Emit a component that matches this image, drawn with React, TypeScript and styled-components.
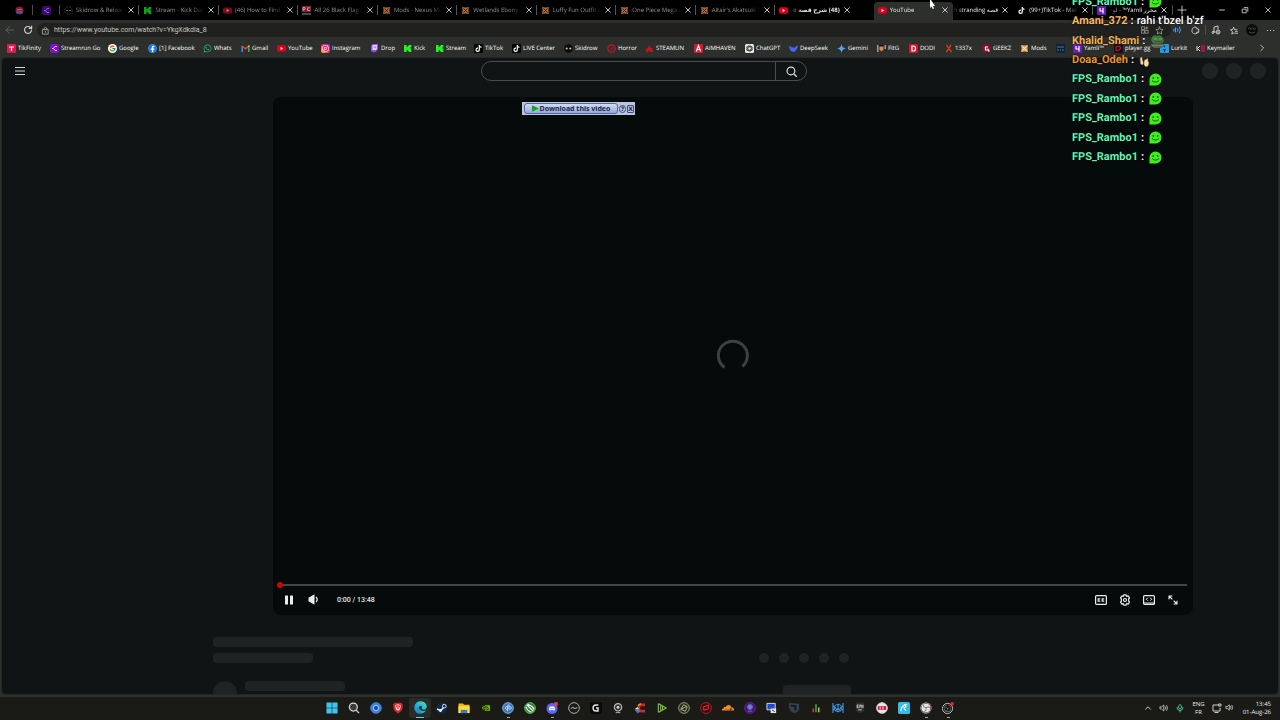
import React from "react";
import styled, { createGlobalStyle, css } from "styled-components";
import {
  FaTiktok, FaInstagram, FaWhatsapp, FaDiscord, FaCloudflare, FaEdge, FaFacebook,
} from "react-icons/fa";
import { SiNvidia, SiBrave, SiObsstudio } from "react-icons/si";
import { FcGoogle } from "react-icons/fc";

const ui = `"Open Sans", "Noto Sans", "DejaVu Sans", sans-serif`;

const GlobalStyle = createGlobalStyle`
  * { box-sizing: border-box; }
  html, body { margin: 0; padding: 0; background: #000; }
  body { font-family: ${ui}; font-size: 6px; color: #e4e4e4; overflow: hidden; text-rendering: geometricPrecision; }
  button, input { font: inherit; color: inherit; border: 0; padding: 0; margin: 0; background: none; outline: none; }
  svg { display: block; flex: none; }
`;

/* ---------- browser chrome ---------- */

const Desktop = styled.div`
  position: relative;
  display: flex;
  flex-direction: column;
  height: 100vh;
  background: #2d2f2d;
  overflow: hidden;
`;

const TabStrip = styled.header`
  display: flex;
  flex: none;
  height: 20px;
  background: #000;
`;

const PinnedTab = styled.button<{ $wide?: boolean }>`
  display: flex;
  align-items: center;
  justify-content: center;
  flex: none;
  width: ${(p) => (p.$wide ? 33 : 27)}px;
  padding-left: ${(p) => (p.$wide ? 5 : 0)}px;
  background: linear-gradient(#4c4c4c, #4c4c4c) right 5px / 1px 10px no-repeat;
`;

type TabKind = "idle" | "bright" | "active" | "covered";

const TabBox = styled.div<{ $kind: TabKind; $line: boolean }>`
  display: flex;
  align-items: center;
  gap: 3px;
  min-width: 0;
  height: 20px;
  padding: 0 4px;
  flex: ${(p) => (p.$kind === "covered" ? "0 0 60px" : "1 1 79px")};
  ${(p) =>
    p.$line &&
    css`
      background: linear-gradient(#555, #555) right 5px / 1px 10px no-repeat;
    `}
  ${(p) =>
    p.$kind === "active" &&
    css`
      height: 18px;
      margin: 2px 0 0 19px;
      padding-bottom: 2px;
      background: #2d2f2d;
      border-radius: 4px 4px 0 0;
    `}
  ${(p) => p.$kind === "covered" && "padding-left: 0;"}
`;

const TabTitle = styled.span<{ $kind: TabKind; $rtl?: boolean }>`
  flex: 1;
  min-width: 0;
  overflow: hidden;
  white-space: nowrap;
  line-height: 12px;
  direction: ${(p) => (p.$rtl ? "rtl" : "ltr")};
  color: ${(p) => (p.$kind === "idle" ? "#929292" : "#e8e8e8")};
  font-weight: ${(p) => (p.$kind === "bright" ? 700 : 400)};
  mask-image: ${(p) =>
    `linear-gradient(${p.$rtl ? "to left" : "to right"}, #000 ${p.$kind === "active" ? 100 : 75}%, transparent)`};
`;

const IconButton = styled.button<{ $w?: number; $tone?: string }>`
  display: flex;
  align-items: center;
  justify-content: center;
  flex: none;
  width: ${(p) => p.$w ?? 18}px;
  height: 14px;
  color: ${(p) => p.$tone ?? "#cfcfcf"};
`;

const TabClose = styled(IconButton)`
  width: 8px;
`;

const StripEnd = styled.div`
  display: flex;
  align-items: center;
  justify-content: space-between;
  flex: none;
  width: 108px;
  padding: 0 3px 0 1px;
  background: linear-gradient(#4c4c4c, #4c4c4c) left 5px / 1px 10px no-repeat;
`;

const WindowButtons = styled.div`
  display: flex;
  gap: 5px;
`;

const Toolbar = styled.div`
  display: flex;
  align-items: center;
  flex: none;
  height: 20px;
  padding: 0 1px;
  background: #2d2f2d;
`;

const AddressBar = styled.label`
  display: flex;
  align-items: center;
  flex: 1;
  height: 14px;
  padding: 0 5px 0 4px;
  border-radius: 7px;
  background: #20211e;
`;

const UrlInput = styled.input`
  flex: 1;
  min-width: 0;
  height: 12px;
  padding-left: 4px;
  font-family: Roboto, sans-serif;
  font-size: 7px;
  color: #c4c4c4;
`;

const ExtensionsButton = styled(IconButton)`
  background: linear-gradient(#4c4e4c, #4c4e4c) 22px 2px / 1px 10px no-repeat;
`;

const BookmarksBar = styled.nav`
  display: flex;
  align-items: center;
  flex: none;
  height: 16px;
  padding-left: 7px;
  background: #2d2f2d;
`;

const Bookmark = styled.a<{ $w: number }>`
  display: flex;
  align-items: center;
  gap: 2px;
  flex: 0 0 ${(p) => p.$w}px;
  line-height: 12px;
  white-space: nowrap;
  color: #fff;
  text-decoration: none;
`;

const More = styled(IconButton)`
  margin-left: auto;
  margin-right: 9px;
`;

/* ---------- page ---------- */

const Page = styled.main`
  position: relative;
  flex: 1;
  min-height: 0;
  margin: 1px 1px 2px;
  border: 1px solid #232726;
  border-radius: 5px;
  background: #101415;
  overflow: hidden;
`;

const Masthead = styled.div`
  display: grid;
  grid-template-columns: 1fr 326px 1fr;
  align-items: center;
  height: 26px;
  padding: 0 5px 0 13px;
`;

const SearchForm = styled.form`
  display: flex;
  width: 326px;
  height: 20px;
  border: 1px solid #4a4d4d;
  border-radius: 10px;
  overflow: hidden;
`;

const SearchInput = styled.input`
  flex: 1;
  min-width: 0;
  padding: 0 8px;
`;

const SearchButton = styled.button`
  display: flex;
  align-items: center;
  justify-content: center;
  width: 31px;
  border-left: 1px solid #4a4d4d;
  color: #dcdcdc;
`;

const Ghosts = styled.div`
  display: flex;
  justify-content: flex-end;
  gap: 8px;
  padding-right: 7px;
`;

const Ghost = styled.span<{ $w: number; $h: number }>`
  display: block;
  flex: none;
  width: ${(p) => p.$w}px;
  height: ${(p) => p.$h}px;
  border-radius: ${(p) => (p.$w === p.$h ? 12 : 4)}px;
  background: #202324;
`;

const Player = styled.section`
  position: relative;
  display: flex;
  flex-direction: column;
  aspect-ratio: 16 / 9;
  margin: 13px 85px 0 271px;
  padding: 0 6px 0 4px;
  border-radius: 8px;
  background: #050a0b;
`;

const Stage = styled.div`
  display: flex;
  align-items: center;
  justify-content: center;
  flex: 1;
  padding: 33px 0 0 2px;
`;

const Seek = styled.input`
  appearance: none;
  flex: none;
  width: 100%;
  height: 6px;
  background: linear-gradient(#424646, #424646) center / 100% 2px no-repeat;
  &::-webkit-slider-thumb {
    appearance: none;
    width: 6px;
    height: 6px;
    border-radius: 3px;
    background: #d3000f;
  }
`;

const Controls = styled.div`
  display: flex;
  align-items: center;
  flex: none;
  height: 24px;
  margin-bottom: 3px;
  padding-right: 2px;
  font-family: Roboto, sans-serif;
  font-size: 7px;
  font-weight: 500;
  color: #e8e8e8;
`;

const ControlButton = styled(IconButton)`
  width: 24px;
  color: #ececec;
`;

const Time = styled.span`
  flex: 1;
  padding-left: 12px;
`;

const DownloadBar = styled.div`
  position: absolute;
  top: 5px;
  left: 249px;
  display: flex;
  align-items: center;
  gap: 1px;
  height: 13px;
  padding: 0 1px 0 2px;
  background: #b9c6de;
  color: #1c2450;
`;

const DownloadButton = styled.button`
  display: flex;
  align-items: center;
  justify-content: center;
  gap: 1px;
  width: 94px;
  height: 11px;
  border: 1px solid #4f68a8;
  border-radius: 3px;
  background: linear-gradient(#d2dcee, #94a9d4);
  font: bold 7px/9px "Noto Sans", sans-serif;
  white-space: nowrap;
`;

const BadgeButton = styled.button<{ $round?: boolean }>`
  width: 7px;
  height: 8px;
  border: 1px solid #3e4c80;
  border-radius: ${(p) => (p.$round ? 4 : 1)}px;
  font: bold 6px/6px "DejaVu Sans", sans-serif;
`;

const Below = styled.div`
  display: flex;
  justify-content: space-between;
  width: 638px;
  margin: 22px 0 0 211px;
`;

const Lines = styled.div`
  display: flex;
  flex-direction: column;
  gap: 6px;
`;

const Owner = styled.div`
  display: flex;
  gap: 8px;
  padding-top: 12px;
`;

const Actions = styled.div`
  display: flex;
  flex-direction: column;
  align-items: flex-end;
  padding-top: 16px;
`;

const Dots = styled.div`
  display: flex;
  gap: 10px;
  padding: 0 2px 22px 0;
`;

/* ---------- overlay chat ---------- */

const Chat = styled.aside`
  position: absolute;
  top: -8px;
  right: 0;
  display: flex;
  flex-direction: column;
  width: 208px;
  height: 175px;
  font: 700 11px/14px Roboto, sans-serif;
  text-shadow: 0 0 2px #000;
  pointer-events: none;
`;

const ChatLine = styled.div`
  display: flex;
  align-items: center;
  flex: 1;
  gap: 3px;
  color: #fff;
  white-space: nowrap;
`;

const Nick = styled.span<{ $c: string }>`
  color: ${(p) => p.$c};
`;

const Words = styled.span`
  font-weight: 500;
`;

const Emote = styled.span`
  padding-left: 2px;
`;

const Pointer = styled.svg`
  position: absolute;
  top: 0;
  left: 929px;
`;

/* ---------- taskbar ---------- */

const Taskbar = styled.footer`
  display: grid;
  grid-template-columns: 1fr auto 1fr;
  align-items: center;
  flex: none;
  height: 23px;
  padding-bottom: 2px;
  background: #1a1b17;
`;

const Apps = styled.div`
  display: flex;
`;

const AppButton = styled.button<{ $active?: boolean; $open?: boolean }>`
  position: relative;
  display: flex;
  align-items: center;
  justify-content: center;
  width: 22px;
  height: 20px;
  border-radius: 3px;
  background: ${(p) => (p.$active ? "#2a2c29" : "none")};
  &::after {
    content: "";
    display: ${(p) => (p.$active || p.$open ? "block" : "none")};
    position: absolute;
    bottom: 0;
    width: ${(p) => (p.$active ? 8 : 3)}px;
    height: 1px;
    background: ${(p) => (p.$active ? "#56d3f5" : "#a5a5a5")};
  }
`;

const Tray = styled.div`
  display: flex;
  align-items: center;
  justify-content: flex-end;
  padding-right: 9px;
  color: #f0f0f0;
  line-height: 8px;
`;

const Lang = styled.button`
  width: 21px;
  line-height: 8px;
  text-align: center;
`;

const Clock = styled.time`
  width: 38px;
  text-align: right;
  white-space: nowrap;
`;

/* ---------- drawings ---------- */

type StrokeProps = { d: string; size?: number; w?: number; color?: string };
const Stroke = ({ d, size = 10, w = 1, color = "currentColor" }: StrokeProps) => (
  <svg width={size} height={size} viewBox="0 0 10 10" fill="none" stroke={color} strokeWidth={w} strokeLinecap="round" strokeLinejoin="round">
    <path d={d} />
  </svg>
);

const CROSS = "M2.2 2.2L7.8 7.8M7.8 2.2L2.2 7.8";
const SPEAKER = "M1 4v2h1.5L4.8 8V2L2.5 4zM6.3 3.7q1 1.3 0 2.6M7.7 2.5q2 2.5 0 5";

const YouTubeMark = () => (
  <svg width="9" height="9" viewBox="0 0 9 9"><rect y="1.3" width="9" height="6.4" rx="1.8" fill="#e3001c" /><path d="M3.6 3v3l2.6-1.5z" fill="#fff" /></svg>
);
const KickMark = () => (
  <svg width="9" height="9" viewBox="0 0 9 9"><path d="M1 1h2.6v2h1V2h1V1H8.4v2.3h-1v1.2h1V8H5.6V7h-1V6h-1v2H1z" fill="#1df51d" /></svg>
);
const Purple = () => (
  <svg width="9" height="9" viewBox="0 0 9 9"><rect width="9" height="9" rx="2" fill="#7a12d6" /><path d="M2 4.5h1.5L5 2.5h2M3.5 4.5L5 6.5h2" stroke="#f0b8ff" fill="none" /></svg>
);
const NexusMark = ({ bright }: { bright?: boolean }) => (
  <svg width="9" height="9" viewBox="0 0 9 9"><path d="M1 1l3.5.6L8 1l-.6 3.5L8 8l-3.5-.6L1 8l.6-3.5z" fill={bright ? "#f3a75c" : "#a5683a"} /><path d="M2.5 2.5l4 4M6.5 2.5l-4 4" stroke={bright ? "#fff" : "#3a2414"} strokeWidth=".9" /></svg>
);
const Tile = ({ bg, mark, fg = "#fff", round }: { bg: string; mark?: string; fg?: string; round?: boolean }) => (
  <svg width="9" height="9" viewBox="0 0 9 9">
    <rect width="9" height="9" rx={round ? 4.5 : 1} fill={bg} />
    {mark && <path d={mark} fill="none" stroke={fg} strokeWidth="1.2" />}
  </svg>
);
const TikTokTile = () => (
  <svg width="9" height="9" viewBox="0 0 9 9"><rect width="9" height="9" rx="1" fill="#050505" /><FaTiktok x="1" y="1" size={7} color="#fff" /></svg>
);
const GmailMark = () => (
  <svg width="9" height="9" viewBox="0 0 9 9" fill="none" strokeWidth="1.6"><path d="M1.2 8V2" stroke="#4285f4" /><path d="M7.8 8V2" stroke="#34a853" /><path d="M1 2l3.5 2.8L8 2" stroke="#ea4335" /><path d="M7.2 2.6L8.5 1.7" stroke="#fbbc04" /></svg>
);
const InstaTile = () => (
  <svg width="9" height="9" viewBox="0 0 9 9">
    <defs><linearGradient id="ig" x1="0" y1="1" x2="1" y2="0"><stop offset="0" stopColor="#fdc050" /><stop offset=".5" stopColor="#ee2a62" /><stop offset="1" stopColor="#8434e0" /></linearGradient></defs>
    <rect width="9" height="9" rx="2" fill="url(#ig)" /><FaInstagram x="1" y="1" size={7} color="#fff" />
  </svg>
);
const Skull = () => (
  <svg width="9" height="9" viewBox="0 0 9 9"><circle cx="4.5" cy="4.5" r="4.3" fill="#090909" /><circle cx="2.7" cy="4.5" r="1.1" fill="#d9adad" /><circle cx="6.3" cy="4.5" r="1.1" fill="#d9adad" /></svg>
);
const RedRing = () => (
  <svg width="9" height="9" viewBox="0 0 9 9" fill="none" stroke="#c9102a"><circle cx="4.5" cy="4.5" r="3.7" strokeWidth="1.2" /><path d="M2.8 5.8L6 2.8M4 6.4l2.4-2" strokeWidth=".8" /></svg>
);
const OpenAi = () => (
  <svg width="9" height="9" viewBox="0 0 9 9"><rect width="9" height="9" rx="1.5" fill="#e9e9e9" /><g fill="none" stroke="#222" strokeWidth=".6"><ellipse cx="4.5" cy="4.5" rx="1.7" ry="3.2" /><ellipse cx="4.5" cy="4.5" rx="1.7" ry="3.2" transform="rotate(60 4.5 4.5)" /><ellipse cx="4.5" cy="4.5" rx="1.7" ry="3.2" transform="rotate(120 4.5 4.5)" /></g></svg>
);
const Solid = ({ d, c }: { d: string; c: string }) => (
  <svg width="9" height="9" viewBox="0 0 9 9"><path d={d} fill={c} /></svg>
);
const FaceTile = () => (
  <svg width="9" height="9" viewBox="0 0 9 9"><rect width="9" height="9" fill="#3a2a22" /><path d="M2.5 1.5h4v4L4.5 7.5 2.5 5.5z" fill="#c98c68" /><path d="M2 1h5v1.5H2z" fill="#1a1210" /><path d="M0 1h1.5v7H0zM7.5 1H9v4H7.5z" fill="#9f9a95" /></svg>
);

const Blob = () => (
  <svg width="13" height="13" viewBox="0 0 13 13"><path d="M.5 12.5V6.5a6 6 0 1 1 6 6z" fill="#3df01c" /><circle cx="4.3" cy="5" r=".9" fill="#175a0a" /><circle cx="8.7" cy="5" r=".9" fill="#175a0a" /><path d="M3 7.5q3.5 3.3 7 0" stroke="#175a0a" strokeWidth="1" fill="none" /></svg>
);
const Pepe = () => (
  <svg width="15" height="14" viewBox="0 0 15 14"><path d="M2 3q2-3 5-1 4-2 6 2l1 3-2 2H3L1 6z" fill="#3c7a3b" /><path d="M4 5h3M9 5h3" stroke="#8fae84" strokeWidth=".8" /><path d="M4 7.5h8" stroke="#6a3a2c" strokeWidth=".8" /><path d="M1 10q6-2 13 0v2l-3 2H4l-3-2z" fill="#4f6350" /><path d="M2 11.5h11" stroke="#7c8f7e" strokeWidth=".8" /></svg>
);
const Hands = () => (
  <svg width="11" height="13" viewBox="0 0 11 13"><path d="M1 4l2-1 .5 3 1 3-1 2-2-1zM5 8l1-3 1 1 1-2 1 1v2l1 2-1 3-2 1-2-2z" fill="#f3deb0" stroke="#7d5f38" strokeWidth=".5" /></svg>
);

/* ---------- data ---------- */

type TabData = { icon?: React.ReactNode; title: string; kind?: TabKind; rtl?: boolean; line?: boolean };
const tabs: TabData[] = [
  { icon: <svg width="9" height="9" viewBox="0 0 9 9"><circle cx="4.5" cy="4.5" r="3.8" fill="none" stroke="#555" strokeDasharray="2 1" strokeWidth=".6" /><path d="M2 4.5h2M5 4.5h2" stroke="#777" /></svg>, title: "Skidrow & Reload" },
  { icon: <svg width="9" height="9" viewBox="0 0 9 9"><path d="M1 1h2.6v2h1V2h1V1H8.4v2.3h-1v1.2h1V8H5.6V7h-1V6h-1v2H1z" fill="#159b1c" /></svg>, title: "Stream - Kick Dash" },
  { icon: <svg width="9" height="9" viewBox="0 0 9 9"><rect y="1.5" width="9" height="6" rx="1.5" fill="#7d0a18" /><path d="M3.6 3v3l2.6-1.5z" fill="#b99" /></svg>, title: "(46) How to Find B" },
  { icon: <svg width="9" height="9" viewBox="0 0 9 9"><rect width="9" height="6" fill="#8d1b29" /><path d="M1 5V1.500h2v2H1M8 1.800H5.500v2.700H8M0 8h9" stroke="#bbb" strokeWidth=".8" fill="none" /></svg>, title: "All 26 Black Flag R" },
  { icon: <NexusMark />, title: "Mods - Nexus Mo" },
  { icon: <NexusMark />, title: "Wetlands Ebony -" },
  { icon: <NexusMark />, title: "Luffy Fun Outfit at" },
  { icon: <NexusMark />, title: "One Piece Mega P" },
  { icon: <NexusMark />, title: "Altair's Akatsuki R" },
  { icon: <YouTubeMark />, title: "(48) شرح قصة Tube", kind: "bright", rtl: true, line: false },
  { icon: <YouTubeMark />, title: "YouTube", kind: "active", line: false },
  { title: "قصه th stranding", kind: "covered", rtl: true, line: false },
  { icon: <TikTokTile />, title: "(99+)TikTok - Mak", kind: "covered", line: true },
  { icon: <Tile bg="#6a1bb8" mark="M3 2v3h3V2M6 5v2.5" />, title: "محرر Yamli™ - لوحة", kind: "covered", rtl: true, line: false },
];

const FullTab = styled(TabBox)`
  flex: 1 1 79px;
  padding-left: 4px;
`;

const bookmarks: [string, number, React.ReactNode][] = [
  ["TikFinity", 43, <Tile bg="#e01a4f" mark="M2 3h5M4.5 3v4" />],
  ["Streamrun Go", 58, <Purple />],
  ["Google", 40, <svg width="9" height="9" viewBox="0 0 9 9"><circle cx="4.5" cy="4.5" r="4.5" fill="#fff" /><FcGoogle x="1" y="1" size={7} /></svg>],
  ["[1] Facebook", 55, <svg width="9" height="9" viewBox="0 0 9 9"><circle cx="4.5" cy="4.5" r="4" fill="#fff" /><FaFacebook size={9} color="#1877f2" /></svg>],
  ["Whats", 38, <FaWhatsapp size={9} color="#2bb866" />],
  ["Gmail", 36, <GmailMark />],
  ["YouTube", 44, <YouTubeMark />],
  ["Instagram", 49, <InstaTile />],
  ["Drop", 33, <svg width="9" height="9" viewBox="0 0 9 9"><path d="M1 2l1.5-2H8v5.5L5.5 8H4L3 9V7.5H1z" fill="#8d4dff" /><path d="M2.5 1H7v4L5.7 6H2.5z" fill="#eadfff" /><path d="M4 2.3v2M5.7 2.3v2" stroke="#8d4dff" strokeWidth=".8" /></svg>],
  ["Kick", 32, <KickMark />],
  ["Stream", 39, <KickMark />],
  ["TikTok", 38, <TikTokTile />],
  ["LIVE Center", 52, <TikTokTile />],
  ["Skidrow", 43, <Skull />],
  ["Horror", 38, <RedRing />],
  ["STEAMUN", 49, <Solid c="#c4121f" d="M1 8V5l2-1 1-3 2 3h1l1 4H5L4 6 3 8z" />],
  ["AIMHAVEN", 51, <Tile bg="#e3132a" mark="M2.3 7.5l2.2-6 2.2 6M3 5.5h3" />],
  ["ChatGPT", 44, <OpenAi />],
  ["DeepSeek", 48, <Solid c="#4466f2" d="M0 2q2 0 3 1.5Q5 3 6 4q0-2 2-2l1-1Q9 4 7.5 5 7 8 4 8 .5 7 0 2z" />],
  ["Gemini", 40, <Solid c="#4fa3e8" d="M4.5 0Q5 4 9 4.5 5 5 4.5 9 4 5 0 4.5 4 4 4.5 0z" />],
  ["FitG", 32, <FaceTile />],
  ["DODI", 35, <Tile bg="#d6122b" mark="M3 2h1.5q2 0 2 2.5T4.500 7H3z" />],
  ["1337x", 38, <Stroke size={9} w={1.6} color="#d8381c" d="M3 1.5L8 8.5M7.5 1.5L3 8.5" />],
  ["GEEKZ", 38, <Tile round bg="#8b0e28" mark="M6 3H3.5v3H6V4.5M6 6l1.5 1.5" />],
  ["Mods", 36, <NexusMark bright />],
  ["", 17, <Tile bg="#122235" mark="M1 3h7M1 6h2M4 6h1M6 6h2" fg="#3c78b4" />],
  ["Yamli™", 41, <Tile bg="#6a1bb8" mark="M3 2v3h3V2M6 5v2.5" />],
  ["player.gg", 46, <Tile bg="#161012" mark="M2 7V3l3-1 2 2-2 2-3 1" fg="#b9142c" />],
  ["Lurkit", 36, <Tile bg="#1f9de8" mark="M4.5 1.5v1.8M3 5.5h3M4.5 6v2" fg="#0c2c50" />],
  ["Keymailer", 46, <svg width="9" height="9" viewBox="0 0 9 9"><rect x="5" y="1" width="4" height="7" fill="#a01450" /><path d="M1 2v5M4 2L1.5 4.5 4 7" stroke="#e6d6de" fill="none" /></svg>],
];

const Round = ({ bg, children, ring }: { bg: string; ring?: string; children?: React.ReactNode }) => (
  <svg width="12" height="12" viewBox="0 0 13 13"><circle cx="6.5" cy="6.5" r="5.8" fill={bg} stroke={ring ?? bg} />{children}</svg>
);
const Art = ({ children }: { children: React.ReactNode }) => <svg width="12" height="12" viewBox="0 0 13 13">{children}</svg>;

type AppData = { name: string; icon: React.ReactNode; active?: boolean; open?: boolean };
const apps: AppData[] = [
  { name: "Start", icon: <Art><path d="M.5.5h5.7v5.7H.5zM6.8.5h5.7v5.7H6.8zM.5 6.8h5.7v5.7H.5zM6.8 6.8h5.7v5.7H6.8z" fill="#3fc3ef" /></Art> },
  { name: "Search", icon: <Art><circle cx="5.8" cy="5.5" r="4.3" stroke="#ddd" strokeWidth="1.3" fill="#3b3b3b" /><path d="M8.9 8.7l3 3.3" stroke="#ddd" strokeWidth="1.3" /></Art> },
  { name: "Chromium", icon: <Round bg="#3f82dd"><circle cx="6.5" cy="6.5" r="2.9" fill="#1c4ea8" stroke="#b8d4fa" /></Round> },
  { name: "Brave", icon: <Art><path d="M3 .8h7l1.8 2-.8 6-4.5 4-4.5-4-.8-6z" fill="#e21f26" /><SiBrave x="3" y="2.5" size={7} color="#fff" /></Art> },
  { name: "Edge", active: true, icon: <svg width="13" height="13" viewBox="0 0 13 13"><defs><linearGradient id="edge" x1="0" y1="1" x2="1" y2="0"><stop offset="0" stopColor="#1580d8" /><stop offset=".6" stopColor="#29bfd8" /><stop offset="1" stopColor="#5fe07a" /></linearGradient></defs><FaEdge size={13} fill="url(#edge)" /></svg> },
  { name: "Steam", icon: <Art><circle cx="6.5" cy="6.5" r="6" fill="#10294a" /><path d="M1 7.5l4 2 3.5-4" stroke="#e6edf5" strokeWidth="1.7" fill="none" /><circle cx="9" cy="4.5" r="2" fill="#10294a" stroke="#e6edf5" /><circle cx="4.8" cy="9.3" r="1.6" fill="#e6edf5" /></Art> },
  { name: "File Explorer", icon: <Art><path d="M.5 1.5h5l1 1.5h6v9H.5z" fill="#f0b81d" /><path d="M.5 4.5h12V12H.5z" fill="#fddb3a" /><path d="M3 8.5h7V12H3z" fill="#2b7fd6" /></Art> },
  { name: "NVIDIA", icon: <Art><rect x="2" y="3" width="9" height="7" fill="#1c2b0c" /><SiNvidia x="2" y="2" size={9} color="#76b900" /></Art> },
  { name: "qBittorrent", open: true, icon: <Round bg="#3c78bd" ring="#8eb8e2"><path d="M6 3.8v6M6 5.3a1.5 1.5 0 1 0 0 2.2M7.5 2.5v5.3M7.5 5.3a1.5 1.5 0 1 1 0 2.2" stroke="#d5e7fa" fill="none" strokeWidth=".9" /></Round> },
  { name: "Xbox", icon: <Round bg="#2f7a32" ring="#63cc63"><path d="M3 3l7 7M4 2.5Q9 4 11 8M2 5q2 5 6 6" stroke="#eaf5ea" fill="none" strokeWidth="1.4" /></Round> },
  { name: "Discord", open: true, icon: <Art><circle cx="6.5" cy="7" r="6" fill="#5865f2" /><FaDiscord x="3" y="3.5" size={7} color="#fff" /><circle cx="10.7" cy="2.3" r="2.3" fill="#e2405a" /></Art> },
  { name: "Studio", icon: <Round bg="#1b1b1b" ring="#b9b9b9"><path d="M3 7q2-2 3.5-.5T10 6" stroke="#ddd" fill="none" /></Round> },
  { name: "Logitech G", icon: <Art><rect width="13" height="13" rx="2" fill="#0b0b0b" /><path d="M9 3.3H6.5a3.2 3.2 0 1 0 0 6.4h2.2V6.5H6.5" stroke="#e8e8e8" strokeWidth="1.5" fill="none" /></Art> },
  { name: "Webcam", icon: <Art><circle cx="6.5" cy="5.8" r="4" fill="#333" stroke="#bdbdbd" strokeWidth="1.2" /><circle cx="6.5" cy="5.8" r="1.5" fill="#ddd" /><path d="M4 11.5h5" stroke="#bdbdbd" /></Art> },
  { name: "CCleaner", icon: <Art><path d="M12 3H8q-3 0-3 3.5T8 10h4" stroke="#d6252b" strokeWidth="3" fill="none" /><path d="M1 9l4-2 2 3-3 2.5z" fill="#3d7cc9" /><path d="M.5 8l3-2.5 2 2z" fill="#e7e1cf" /><path d="M4 3l3-2 1 1.500-3 2z" fill="#d8952f" /></Art> },
  { name: "Play", icon: <Art><path d="M2.5 1.5v10M3 1.8l8 4.7-8 4.7M5 4v5M7 5v3" stroke="#7cc63a" strokeWidth="1.2" fill="none" /></Art> },
  { name: "Racing", icon: <Round bg="#262b1e" ring="#9aa873"><path d="M3 8l3-5 4 2-2 5-5-2 6-3" stroke="#b0bd8c" fill="none" /></Round> },
  { name: "Red", icon: <Round bg="#2a0709" ring="#ce1c25"><path d="M4 9V5l5-1.5v4L4 9" stroke="#e52a33" fill="none" strokeWidth="1.3" /></Round> },
  { name: "Cloudflare", icon: <Art><FaCloudflare size={13} color="#f48b2a" /></Art> },
  { name: "Streamrun", icon: <Round bg="#38166e" ring="#6a23b3"><circle cx="6.5" cy="5.5" r="2.7" stroke="#c43de0" fill="#20a6b8" /><path d="M4 10h5" stroke="#c43de0" /></Round> },
  { name: "Remote", icon: <Art><path d="M1 1.5h9v7H1z" fill="#2447d6" stroke="#ddd" /><path d="M5 7h6v5H5z" fill="#e4e4e4" /><path d="M6.5 8.5l3 2" stroke="#333" /></Art> },
  { name: "Shield", icon: <Art><path d="M1 1l11 1v5q-1 5-6 5-3-1-5-6z" fill="#35404e" /><path d="M3 4l5 .5V9" stroke="#10151c" strokeWidth="2" fill="none" /></Art> },
  { name: "Meters", icon: <Art><path d="M3.5 11V7" stroke="#e23b2e" strokeWidth="1.6" /><path d="M6.5 11V2.5" stroke="#36b84c" strokeWidth="1.6" /><path d="M9.5 11V6" stroke="#e3b52b" strokeWidth="1.6" /></Art> },
  { name: "Gateway", icon: <Art><path d="M1 1v11M12 1v11M6.5 2v9M1 4l3 2.5L1 9M12 4L9 6.5 12 9M3.5 10l3-3.5 3 3.5" stroke="#3d93dd" strokeWidth="1.2" fill="none" /><circle cx="6.5" cy="6.5" r="4" stroke="#3d93dd" fill="none" /></Art> },
  { name: "Epic Games", icon: <Art><path d="M2 .5h9v9.5l-4.5 2.5L2 10z" fill="#2c2c2c" /><path d="M3.5 3v3.5M3.5 3.2h1.5M3.5 4.7h1.2M3.5 6.3H5M6.3 6.700V3.200h1v1.800M8.500 3v3.700M9.800 3v3.500M4.500 8.500h4" stroke="#eee" strokeWidth=".8" fill="none" /></Art> },
  { name: "Media", icon: <Round bg="#f0e5e6" ring="#e6d7d9"><path d="M2 4.5h9v4H2z" fill="#c31834" /><path d="M4.5 5v3M7.500 5v3" stroke="#fff" /></Round> },
  { name: "Ryu", icon: <Art><rect width="13" height="13" rx="2" fill="#33bbea" /><path d="M3 10l1-4 3-3 1.5 2-2 1.5 2 3M7 3h3" stroke="#fff" strokeWidth="1.2" fill="none" /></Art> },
  { name: "OBS", open: true, icon: <Art><circle cx="6.5" cy="6.5" r="6" fill="#e3e3e3" /><SiObsstudio x="1" y="1" size={11} color="#222" /><path d="M10 1.500q3 3 1.500 7" stroke="#b3202c" fill="none" /></Art> },
  { name: "OBS Studio", open: true, icon: <Art><circle cx="6" cy="7" r="5.5" fill="#161616" stroke="#c9c9c9" /><SiObsstudio x="2" y="3" size={8} color="#c9c9c9" /><circle cx="11" cy="2" r="2" fill="#ee1c25" /></Art> },
];

const chat: { nick: string; color: string; body: React.ReactNode }[] = [
  { nick: "FPS_Rambo1", color: "#5ef7b5", body: <Emote><Blob /></Emote> },
  { nick: "Amani_372", color: "#f7b765", body: <Words>rahi t'bzel b'zf</Words> },
  { nick: "Khalid_Shami", color: "#f0b052", body: <Emote><Pepe /></Emote> },
  { nick: "Doaa_Odeh", color: "#e8932a", body: <Emote><Hands /></Emote> },
  ...Array.from({ length: 5 }, () => ({ nick: "FPS_Rambo1", color: "#5ef7b5", body: <Emote><Blob /></Emote> })),
];

const Tab = ({ icon, title, kind = "idle", rtl, line = true }: TabData) => {
  const Box = kind === "covered" && icon ? FullTab : TabBox;
  return (
    <Box $kind={kind} $line={line}>
      {icon}
      <TabTitle $kind={kind} $rtl={rtl}>{title}</TabTitle>
      <TabClose aria-label={`Close ${title}`}><Stroke size={8} w={1.2} d={CROSS} /></TabClose>
    </Box>
  );
};

export default function App() {
  return (
    <Desktop>
      <GlobalStyle />
      <TabStrip>
        <PinnedTab $wide aria-label="Pinned tab">
          <svg width="9" height="9" viewBox="0 0 9 9"><circle cx="4.5" cy="4.5" r="4" fill="#8e1b35" /><path d="M1.5 5h6v2.5h-6z" fill="#425a9c" /><path d="M2 3.5h5" stroke="#d05468" /></svg>
        </PinnedTab>
        <PinnedTab aria-label="Streamrun">
          <svg width="9" height="9" viewBox="0 0 9 9"><rect width="9" height="9" rx="2" fill="#3c0a78" /><path d="M2 4.5h1.5L5 2.5h2M3.5 4.5L5 6.5h2" stroke="#a45ac8" fill="none" /></svg>
        </PinnedTab>
        {tabs.map((t) => <Tab key={t.title} {...t} />)}
        <StripEnd>
          <IconButton aria-label="New tab"><Stroke w={0.9} d="M5 1v8M1 5h8" /></IconButton>
          <WindowButtons>
            <IconButton aria-label="Minimize"><Stroke size={8} d="M2 5h6" w={1.2} /></IconButton>
            <IconButton aria-label="Restore"><Stroke size={8} d="M2 4h4.5v4.5H2zM4 2h4.5v4.5" w={1.1} /></IconButton>
            <IconButton aria-label="Close"><Stroke size={8} d={CROSS} w={1.1} /></IconButton>
          </WindowButtons>
        </StripEnd>
      </TabStrip>

      <Toolbar>
        <IconButton aria-label="Back" $tone="#5a5c5a"><Stroke d="M9 5H1M4.5 1.5L1 5l3.5 3.5" /></IconButton>
        <IconButton aria-label="Reload"><Stroke d="M8.5 5A3.5 3.5 0 1 1 7.5 2.5L8.7 3.5M8.7 1v2.5H6.2" w={1.1} /></IconButton>
        <AddressBar>
          <Stroke size={9} d="M2 4h6v5H2zM3.5 4V2.5q1.5-2 3 0V4M5 6v1" color="#a8a8a8" />
          <UrlInput aria-label="Address" defaultValue="https://www.youtube.com/watch?v=YkgXdkdia_8" />
          <IconButton $w={14} aria-label="Apps" $tone="#999"><Stroke size={8} d="M1 1h3.5v3.5H1zM1 5.5h3.5V9H1zM5.5 5.5H9V9H5.5zM7.2 1v3M5.7 2.5h3" /></IconButton>
          <IconButton $w={14} aria-label="Favorite" $tone="#999"><Stroke size={9} d="M5 1l1.2 2.7 2.8.3-2.1 2 .6 3L5 7.5 2.5 9l.6-3L1 4l2.8-.3z" w={0.9} /></IconButton>
        </AddressBar>
        <IconButton $w={12} aria-label="Read aloud" $tone="#4f9cf0"><Stroke d="M2 4v2M3.5 3v4M5.5 3.5q1 1.5 0 3M7.5 2q2 3 0 6" /></IconButton>
        <ExtensionsButton $w={24} aria-label="Extensions"><Stroke size={9} d="M8.5 5.5A3.7 3.7 0 1 1 6 1.5V3l2.5.3V7H6" /></ExtensionsButton>
        <IconButton aria-label="Media"><Stroke d="M3 7.5V2l4-1v3M3 7.5a1 1 0 1 1-1-1h1M5 7a2 2 0 1 0 4 0 2 2 0 1 0-4 0M7 6v2" /></IconButton>
        <IconButton aria-label="Favorites"><Stroke size={9} d="M4 1.5L5 4l3 .2M8 6H6M8.5 8h-3M4 1.5L3 4l-2.5.2L2.7 6 2 9l2.5-1.5" /></IconButton>
        <IconButton aria-label="Profile">
          <svg width="12" height="12" viewBox="0 0 12 12"><circle cx="6" cy="6" r="6" fill="#0c0c0c" /><path d="M2 5l2-1.5 1 2 2-2 1 2 2-1M3 8l3 1 3-1" stroke="#4c4c4c" strokeWidth=".8" fill="none" /></svg>
        </IconButton>
        <IconButton aria-label="Settings and more"><Stroke size={9} w={1.3} d="M1.5 5h.1M5 5h.1M8.5 5h.1" /></IconButton>
      </Toolbar>

      <BookmarksBar>
        {bookmarks.map(([label, w, icon], i) => (
          <Bookmark key={i} href="#" $w={w} aria-label={label || "Bookmark"}>{icon}{label}</Bookmark>
        ))}
        <More aria-label="More bookmarks"><Stroke size={8} d="M3.5 1.5L7 5 3.5 8.5" w={1.1} /></More>
      </BookmarksBar>

      <Page>
        <Masthead>
          <IconButton $w={10} aria-label="Guide" $tone="#d5d5d5"><Stroke w={1.2} d="M.5 1.5h9M.5 5h9M.5 8.5h9" /></IconButton>
          <SearchForm onSubmit={(e) => e.preventDefault()}>
            <SearchInput aria-label="Search" />
            <SearchButton aria-label="Submit search"><Stroke size={11} w={1.1} d="M1 4.5a3.5 3.5 0 1 0 7 0 3.5 3.5 0 1 0-7 0M7 7l2.5 2.5" /></SearchButton>
          </SearchForm>
          <Ghosts>{[0, 1, 2].map((i) => <Ghost key={i} $w={16} $h={16} />)}</Ghosts>
        </Masthead>
        <Player>
          <Stage>
            <svg width="34" height="34" viewBox="0 0 34 34" fill="none" stroke="#3d4141" strokeWidth="3"><path d="M8.5 28.5a14.5 14.5 0 1 1 18-1" /></svg>
          </Stage>
          <DownloadBar>
            <DownloadButton><svg width="7" height="7" viewBox="0 0 7 7"><path d="M0 .3v6.4l7-3.2z" fill="#12a524" /></svg>Download this video</DownloadButton>
            <BadgeButton $round aria-label="Help">?</BadgeButton>
            <BadgeButton aria-label="Close">X</BadgeButton>
          </DownloadBar>
          <Seek type="range" min={0} max={828} defaultValue={0} aria-label="Seek" />
          <Controls>
            <ControlButton aria-label="Pause"><svg width="10" height="10" viewBox="0 0 10 10" fill="currentColor"><rect x="1" y=".5" width="3" height="9" rx=".6" /><rect x="6" y=".5" width="3" height="9" rx=".6" /></svg></ControlButton>
            <ControlButton aria-label="Mute"><svg width="11" height="11" viewBox="0 0 11 11"><path d="M.5 3.8L6.5.3v10.4L.5 7.2z" fill="currentColor" /><path d="M8 3q2.5 2.5 0 5" stroke="currentColor" fill="none" strokeWidth="1.2" /></svg></ControlButton>
            <Time>0:00 / 13:48</Time>
            <ControlButton aria-label="Subtitles"><svg width="12" height="10" viewBox="0 0 12 10" fill="none" stroke="currentColor" strokeWidth="1.2"><rect x=".6" y=".6" width="10.8" height="8.8" rx="1" /><path d="M5.2 3.8H3.2v2.4h2M9.2 3.8h-2v2.4h2" /></svg></ControlButton>
            <ControlButton aria-label="Settings"><svg width="12" height="12" viewBox="0 0 12 12" fill="none" stroke="currentColor" strokeWidth="1.2"><path d="M4.8.8h2.4l.4 1.5 1.5-.4 1.4 2L9.6 5v2l.9 1.1-1.4 2-1.5-.4-.4 1.5H4.8l-.4-1.5-1.5.4-1.4-2L2.4 7V5l-.9-1.1 1.4-2 1.5.4z" strokeLinejoin="round" /><circle cx="6" cy="6" r="1.5" /></svg></ControlButton>
            <ControlButton aria-label="Theater mode"><svg width="12" height="10" viewBox="0 0 12 10" fill="none" stroke="currentColor" strokeWidth="1.2"><rect x=".6" y=".6" width="10.8" height="8.8" rx="1" /><path d="M4.8 2.7L3.3 4.2l1.5 1.5M7.2 2.7l1.5 1.5-1.5 1.5M1 8h10" strokeWidth="1" /></svg></ControlButton>
            <ControlButton aria-label="Full screen"><Stroke w={1.1} d="M1 4V1h3M1 1l3 3M9 6v3H6M9 9L6 6" /></ControlButton>
          </Controls>
        </Player>
        <Below>
          <Lines>
            <Ghost $w={200} $h={10} />
            <Ghost $w={100} $h={10} />
            <Owner><Ghost $w={24} $h={24} /><Ghost $w={100} $h={10} /></Owner>
          </Lines>
          <Actions>
            <Dots>{[0, 1, 2, 3, 4].map((i) => <Ghost key={i} $w={10} $h={10} />)}</Dots>
            <Ghost $w={68} $h={18} />
          </Actions>
        </Below>
      </Page>

      <Taskbar>
        <span />
        <Apps>
          {apps.map((a) => <AppButton key={a.name} aria-label={a.name} $active={a.active} $open={a.open}>{a.icon}</AppButton>)}
        </Apps>
        <Tray>
          <IconButton $w={14} aria-label="Hidden icons"><Stroke size={8} w={1.2} d="M2 6.5L5 3.5l3 3" /></IconButton>
          <IconButton $w={17} aria-label="Volume"><Stroke d={SPEAKER} w={0.8} /></IconButton>
          <IconButton $w={16} aria-label="Microphone" $tone="#4fd3a5"><Stroke d="M3.7 2.5q1.3-2 2.6 0V5q-1.3 2-2.6 0zM2 4.5q0 3 3 3t3-3M5 7.5V9" w={0.9} /></IconButton>
          <Lang>ENG<br />FR</Lang>
          <IconButton $w={16} aria-label="Network"><Stroke d="M6 2H1v6h7V5M3 9.5h3M7 1h2v2H7z" /></IconButton>
          <IconButton $w={8} aria-label="Sound"><Stroke size={9} d={SPEAKER} w={0.9} /></IconButton>
          <Clock>13:45<br />01-Aug-26</Clock>
        </Tray>
      </Taskbar>

      <Chat>
        {chat.map((c, i) => (
          <ChatLine key={i}><Nick $c={c.color}>{c.nick}</Nick><span>:</span>{c.body}</ChatLine>
        ))}
      </Chat>
      <Pointer width="7" height="10" viewBox="0 0 7 10"><path d="M1 0h1l4 6H4l1 2.5-1.3.6L2.5 6.5 1 8z" fill="#fff" /></Pointer>
    </Desktop>
  );
}
